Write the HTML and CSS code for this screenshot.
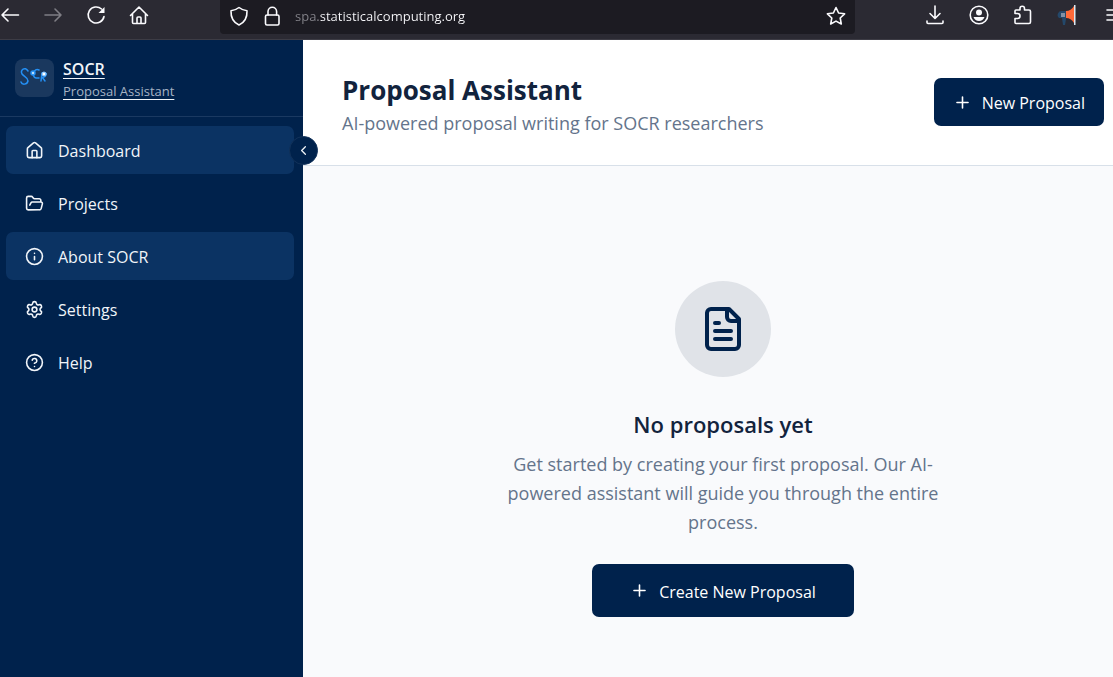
FILE: index.html
```html
<!DOCTYPE html>
<html lang="en">
<head>
  <meta charset="UTF-8">
  <meta name="viewport" content="width=device-width, initial-scale=1.0">
  <title>Proposal Assistant</title>
  <link rel="stylesheet" href="styles.css">
</head>
<body>
  <div class="toolbar">
    <div class="toolbar-nav">
      <button type="button" aria-label="Back"><svg viewBox="0 0 20 20"><path d="M18.500 10H2M8 4l-6 6 6 6"/></svg></button>
      <button type="button" class="dim" aria-label="Forward"><svg viewBox="0 0 20 20"><path d="M2 10h16M12 4l6 6-6 6"/></svg></button>
      <button type="button" aria-label="Reload"><svg viewBox="0 0 20 20"><path d="M18 11.500a8 8 0 1 1-2.500-7.500"/><path d="M18.500 2v6h-6z" fill="currentColor" stroke="none"/></svg></button>
      <button type="button" aria-label="Home"><svg viewBox="0 0 20 20"><path d="M1.500 10.500L10 2l8.500 8.500M3.500 9v8.500q0 1 1 1h11q1 0 1-1V9M8 18v-5q0-1 1-1h2q1 0 1 1v5"/></svg></button>
    </div>
    <div class="urlbar">
      <svg viewBox="0 0 20 20"><path d="M10 1.500c2.500 2 5 3 8 3.200.3 6.500-2 11.500-8 14.300C4 16.200 1.700 11.200 2 4.700c3-.2 5.500-1.200 8-3.200z"/></svg>
      <svg viewBox="0 0 20 20"><rect x="3.500" y="9" width="13.500" height="10" rx="1.500"/><path d="M6 9V5.500a4.300 4.300 0 0 1 8.600 0V9"/></svg>
      <input type="text" value="spa.statisticalcomputing.org" aria-label="Address">
      <button type="button" aria-label="Bookmark this page"><svg viewBox="0 0 20 20"><path d="M10 1.500l2.600 5.500 6 .8-4.400 4.200 1.100 6L10 15.100 4.700 18l1.100-6L1.400 7.800l6-.8z"/></svg></button>
    </div>
    <div class="toolbar-tools">
      <button type="button" aria-label="Downloads"><svg viewBox="0 0 20 20"><path d="M10 1v12M5 8.500l5 5 5-5M2 16v1.500q0 1 1 1h14q1 0 1-1V16"/></svg></button>
      <button type="button" aria-label="Account"><svg viewBox="0 0 20 20"><circle cx="10" cy="10" r="8.800"/><circle cx="10" cy="7.500" r="3" fill="currentColor" stroke="none"/><path d="M4.500 12h11q-1.500 4-5.500 4t-5.500-4z" fill="currentColor" stroke="none"/></svg></button>
      <button type="button" aria-label="Extensions"><svg viewBox="0 0 20 20"><path d="M2 8V6q0-1 1-1h4V3.500a2 2 0 0 1 4.500 0V5H16q1.500 0 1.500 1.500V17q0 1.500-1.500 1.500H3q-1 0-1-1V13.500h2.500a2.300 2.300 0 0 0 0-5H2z"/></svg></button>
      <button type="button" aria-label="Announcements"><svg class="filled" viewBox="0 0 20 20"><path d="M9 6H5a4 4 0 0 0-3 7h3l1 7h2l1-6z" fill="#24486a"/><path d="M4 8h4v4H4z" fill="#8090a5"/><path d="M9 6q5 0 8-5v17q-3-5-8-5z" fill="#ff6a39"/><path d="M17 0h1.500v20H17z" fill="#dce9f2"/></svg></button>
      <button type="button" aria-label="Menu"><svg viewBox="0 0 20 20"><path d="M6 5h14M6 10h14M6 15h14"/></svg></button>
    </div>
  </div>

  <div class="app">
    <aside class="sidebar">
      <a class="brand" href="#">
        <span class="brand-logo">
          <svg viewBox="0 0 39 38"><path d="M13 12c-3-5-8-1-6 3 2 3 6 3 6 7-1 4-6 4-7 1M24 11c-5-3-8 7-3 8h3M26 22l1-8q5-1 4 2-1 3-4 2l3 4"/><circle cx="18" cy="14" r="2" fill="#b4dcff"/><circle cx="29" cy="15" r="2" class="logo-dot"/></svg>
        </span>
        <span class="brand-text">
          <span class="brand-name">SOCR</span>
          <span class="brand-sub">Proposal Assistant</span>
        </span>
      </a>
      <nav class="menu">
        <a class="menu-item active" href="#">
          <svg viewBox="0 0 24 24"><path d="M15 21v-8a1 1 0 0 0-1-1h-4a1 1 0 0 0-1 1v8"/><path d="M3 10a2 2 0 0 1 .709-1.528l7-5.999a2 2 0 0 1 2.582 0l7 5.999A2 2 0 0 1 21 10v9a2 2 0 0 1-2 2H5a2 2 0 0 1-2-2z"/></svg>
          <span>Dashboard</span>
        </a>
        <a class="menu-item" href="#">
          <svg viewBox="0 0 24 24"><path d="m6 14 1.500-2.900A2 2 0 0 1 9.240 10H20a2 2 0 0 1 1.940 2.500l-1.540 6a2 2 0 0 1-1.950 1.500H4a2 2 0 0 1-2-2V5a2 2 0 0 1 2-2h3.900a2 2 0 0 1 1.690.9l.81 1.200a2 2 0 0 0 1.670.9H18a2 2 0 0 1 2 2v2"/></svg>
          <span>Projects</span>
        </a>
        <a class="menu-item active" href="#">
          <svg viewBox="0 0 24 24"><circle cx="12" cy="12" r="10"/><path d="M12 16v-4M12 8h.01"/></svg>
          <span>About SOCR</span>
        </a>
        <a class="menu-item" href="#">
          <svg viewBox="0 0 24 24"><path d="M9.671 4.136a2.340 2.340 0 0 1 4.659 0 2.340 2.340 0 0 0 3.319 1.915 2.340 2.340 0 0 1 2.330 4.033 2.340 2.340 0 0 0 0 3.831 2.340 2.340 0 0 1-2.330 4.033 2.340 2.340 0 0 0-3.319 1.915 2.340 2.340 0 0 1-4.659 0 2.340 2.340 0 0 0-3.320-1.915 2.340 2.340 0 0 1-2.330-4.033 2.340 2.340 0 0 0 0-3.831A2.340 2.340 0 0 1 6.350 6.051a2.340 2.340 0 0 0 3.319-1.915"/><circle cx="12" cy="12" r="3"/></svg>
          <span>Settings</span>
        </a>
        <a class="menu-item" href="#">
          <svg viewBox="0 0 24 24"><circle cx="12" cy="12" r="10"/><path d="M9.090 9a3 3 0 0 1 5.830 1c0 2-3 3-3 3M12 17h.01"/></svg>
          <span>Help</span>
        </a>
      </nav>
      <button type="button" class="collapse" aria-label="Collapse sidebar"><svg viewBox="0 0 24 24"><path d="m15 18-6-6 6-6"/></svg></button>
    </aside>

    <main class="main">
      <header class="page-header">
        <div class="page-title">
          <h1>Proposal Assistant</h1>
          <p class="lead">AI-powered proposal writing for SOCR researchers</p>
        </div>
        <button type="button" class="btn"><svg viewBox="0 0 24 24"><path d="M5 12h14M12 5v14"/></svg><span>New Proposal</span></button>
      </header>
      <section class="empty">
        <div class="empty-icon">
          <svg viewBox="0 0 24 24"><path d="M15 2H6a2 2 0 0 0-2 2v16a2 2 0 0 0 2 2h12a2 2 0 0 0 2-2V7Z"/><path d="M14 2v4a2 2 0 0 0 2 2h4M10 9H8M16 13H8M16 17H8"/></svg>
        </div>
        <h2>No proposals yet</h2>
        <p class="lead">Get started by creating your first proposal. Our AI-powered assistant will guide you through the entire process.</p>
        <button type="button" class="btn btn-large"><svg viewBox="0 0 24 24"><path d="M5 12h14M12 5v14"/></svg><span>Create New Proposal</span></button>
      </section>
    </main>
  </div>
</body>
</html>
```
FILE: styles.css
```css
* {
  box-sizing: border-box;
}
body {
  margin: 0;
  min-height: 100vh;
  display: flex;
  flex-direction: column;
  overflow-x: hidden;
  font-family: "Segoe UI", "Open Sans", sans-serif;
  font-size: 16px;
  background: #f9fafc;
  color: #12233d;
}
h1, h2, p {
  margin: 0;
}
button {
  font: inherit;
  color: inherit;
  border: 0;
  padding: 0;
  background: none;
  cursor: pointer;
}
a {
  color: inherit;
  text-decoration: none;
}
svg {
  display: block;
  flex-shrink: 0;
  fill: none;
  stroke: currentColor;
  stroke-width: 2;
  stroke-linecap: round;
  stroke-linejoin: round;
}

/* browser bar */
.toolbar {
  height: 40px;
  display: flex;
  align-items: flex-start;
  background: #2b2a33;
  border-bottom: 1px solid #3d3c45;
  color: #fbfbfe;
  overflow: hidden;
}
.toolbar svg {
  width: 20px;
  height: 20px;
  stroke-width: 1.6;
}
.toolbar .filled {
  stroke: none;
}
.toolbar-nav {
  width: 220px;
  padding-top: 5px;
  display: flex;
  gap: 23px;
}
.toolbar-nav .dim {
  color: #7f7e85;
}
.urlbar {
  flex: 1;
  height: 34px;
  padding: 0 9px 2px;
  display: flex;
  align-items: center;
  gap: 13px;
  background: #1c1b22;
  border-radius: 0 0 4px 4px;
}
.urlbar input {
  flex: 1;
  min-width: 0;
  padding: 0;
  border: 0;
  outline: 0;
  font-family: "Segoe UI", "Open Sans", sans-serif;
  font-size: 13px;
  /* subdomain is dimmed */
  color: transparent;
  background: linear-gradient(to right, #85848b 25px, #fbfbfe 25px);
  -webkit-background-clip: text;
  background-clip: text;
}
.toolbar-tools {
  width: 258px;
  padding: 5px 0 0 70px;
  display: flex;
  gap: 24px;
}

.app {
  flex: 1;
  display: flex;
}

/* sidebar */
.sidebar {
  position: relative;
  width: 303px;
  flex-shrink: 0;
  background: #00224c;
  color: #f1f5f9;
}
.brand {
  height: 77px;
  padding: 0 15px;
  display: flex;
  align-items: center;
  gap: 9px;
  border-bottom: 1px solid #1a3961;
}
.brand-logo {
  width: 39px;
  height: 38px;
  border-radius: 8px;
  background: #1a385e;
}
.brand-logo svg {
  width: 39px;
  height: 38px;
  stroke: #2490f5;
  stroke-width: 1.5;
}
.brand-logo .logo-dot {
  fill: #fff;
  stroke: #7cc0ff;
  stroke-width: 1;
}
.brand-text {
  padding-top: 4px;
  display: flex;
  flex-direction: column;
  align-items: flex-start;
}
.brand-name,
.brand-sub {
  line-height: 22px;
  text-decoration: underline #f1f5f9;
  text-decoration-skip-ink: none;
  text-underline-offset: 3px;
}
.brand-name {
  font-size: 16px;
  font-weight: 600;
}
.brand-sub {
  font-size: 13px;
  color: #a6b3c4;
}
.menu {
  padding: 9px 9px 9px 6px;
  display: flex;
  flex-direction: column;
  gap: 5px;
}
.menu-item {
  height: 48px;
  padding: 0 19px;
  display: flex;
  align-items: center;
  gap: 14px;
  border-radius: 7px;
}
.menu-item span,
.btn span {
  padding-top: 2px;
}
.menu-item svg {
  width: 19px;
  height: 19px;
}
.menu-item.active {
  background: #0b3363;
}
.collapse {
  position: absolute;
  top: 96px;
  right: -15px;
  width: 29px;
  height: 29px;
  display: flex;
  align-items: center;
  justify-content: center;
  border: 1px solid #12325a;
  border-radius: 50%;
  background: #00224c;
}
.collapse svg {
  width: 15px;
  height: 15px;
}

/* content */
.main {
  flex: 1;
  min-width: 0;
}
.page-header {
  height: 126px;
  padding: 0 9px 1px 39px;
  display: flex;
  align-items: center;
  justify-content: space-between;
  background: #fff;
  border-bottom: 1px solid #d8e0e9;
}
.page-title {
  padding-top: 5px;
}
h1 {
  font-size: 26px;
  line-height: 38px;
  font-weight: 700;
}
.lead {
  font-size: 18px;
  line-height: 29px;
  color: #64748b;
}
.btn {
  height: 48px;
  padding: 0 19px;
  display: flex;
  align-items: center;
  justify-content: center;
  gap: 10px;
  border-radius: 7px;
  background: #00224c;
  color: #fff;
  white-space: nowrap;
}
.btn svg {
  width: 19px;
  height: 19px;
}
.btn-large {
  height: 53px;
  padding: 0 38px;
}
.empty {
  padding: 115px 9px 60px 39px;
  display: flex;
  flex-direction: column;
  align-items: center;
  text-align: center;
}
.empty-icon {
  width: 96px;
  height: 96px;
  display: flex;
  align-items: center;
  justify-content: center;
  border-radius: 50%;
  background: #e0e3e8;
  color: #00224c;
}
.empty-icon svg {
  width: 48px;
  height: 48px;
}
.empty h2 {
  margin: 30px 0 9px;
  font-size: 22px;
  line-height: 34px;
  font-weight: 600;
}
.empty .lead {
  max-width: 460px;
  margin-bottom: 27px;
}
```
